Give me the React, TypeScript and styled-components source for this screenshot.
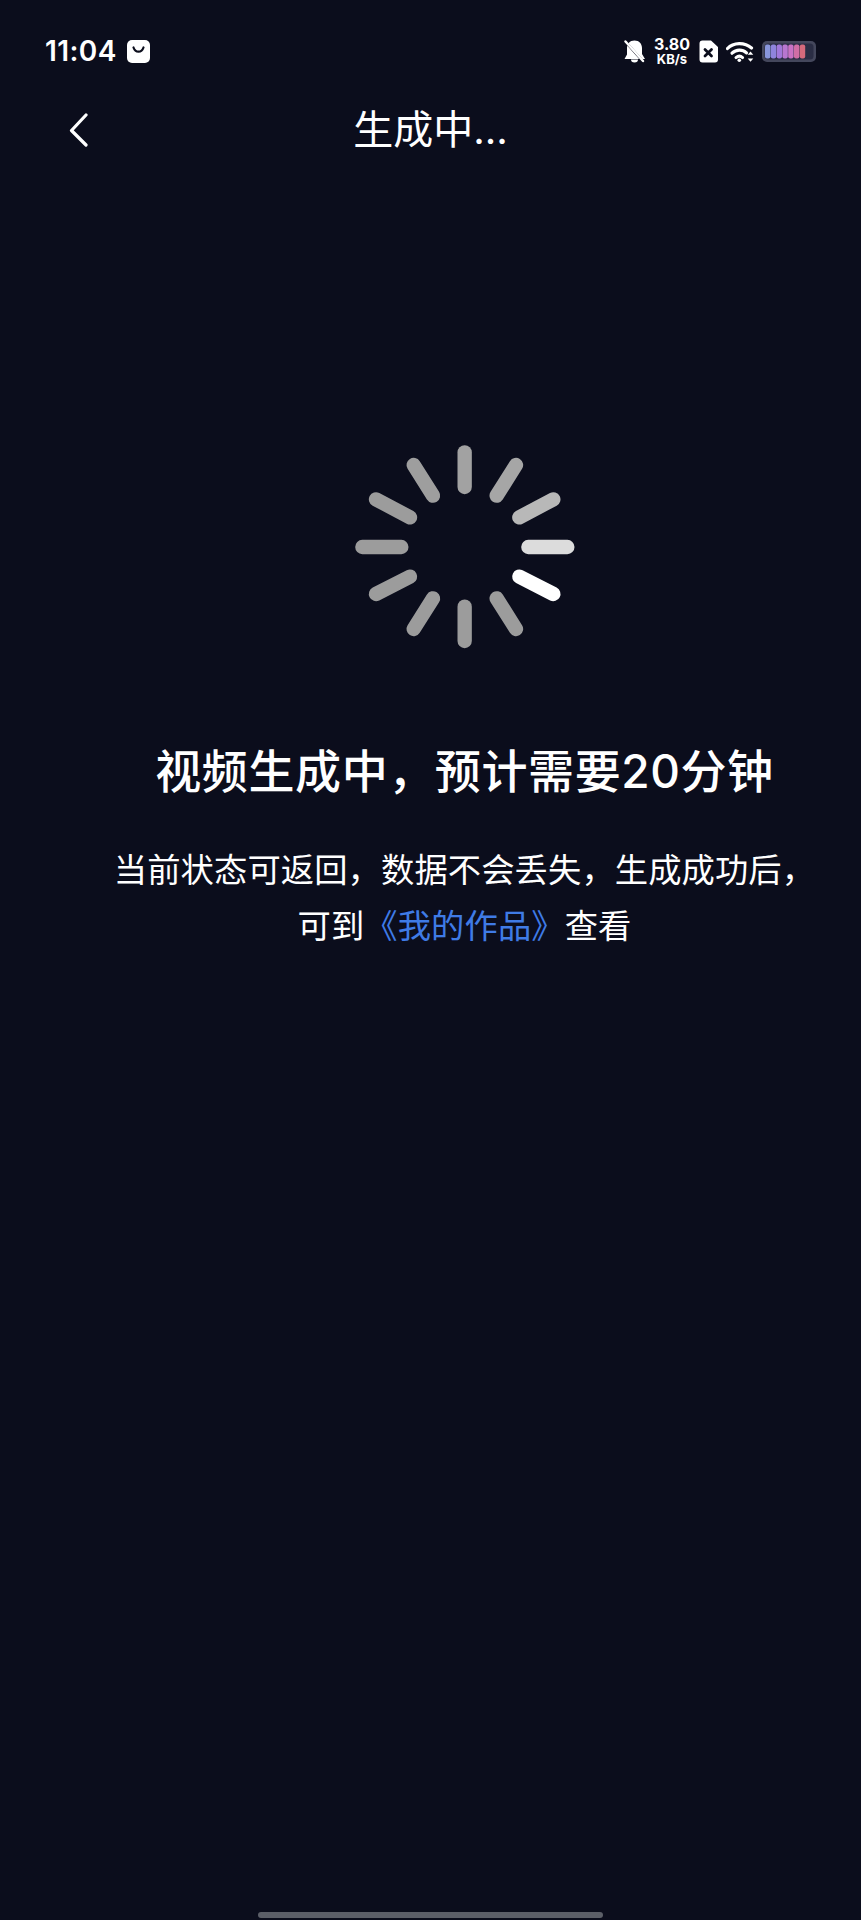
import React from "react";
import styled, { createGlobalStyle } from "styled-components";

const GlobalStyle = createGlobalStyle`
  html, body {
    margin: 0;
    padding: 0;
    background: #0b0d1c;
  }
  body {
    font-family: Inter, "Noto Sans CJK SC", sans-serif;
    color: #fff;
  }
`;

const Page = styled.div`
  display: flex;
  flex-direction: column;
  height: 1920px;
  overflow: hidden;
  background: #0b0d1c;
`;

// Status bar
const StatusBar = styled.div`
  display: flex;
  align-items: center;
  justify-content: space-between;
  box-sizing: border-box;
  height: 100px;
  padding: 20px 45px 18px 45px;
`;

const StatusLeft = styled.div`
  display: flex;
  align-items: center;
  gap: 10px;
`;

const Time = styled.span`
  font-size: 28px;
  font-weight: 600;
  line-height: 28px;
  letter-spacing: 0.4px;
`;

const StatusRight = styled.div`
  display: flex;
  align-items: center;
  gap: 8px;
`;

const Speed = styled.div`
  display: flex;
  flex-direction: column;
  align-items: center;
  font-weight: 700;
  width: 38px;
`;

const SpeedValue = styled.span`
  font-size: 16px;
  line-height: 16px;
`;

const SpeedUnit = styled.span`
  font-size: 13px;
  line-height: 14px;
`;

// Nav bar
const NavBar = styled.div`
  display: grid;
  grid-template-columns: 1fr auto 1fr;
  align-items: center;
  height: 60px;
`;

const BackButton = styled.button`
  justify-self: start;
  display: flex;
  margin-left: 68px;
  padding: 0;
  border: 0;
  background: none;
`;

const Title = styled.h1`
  margin: 0;
  font-size: 40px;
  font-weight: 400;
  line-height: 60px;
`;

// Main content
const Main = styled.main`
  display: flex;
  flex-direction: column;
  align-items: center;
  padding: 270px 0 0 68px;
`;

const Spinner = styled.svg`
  display: block;
  margin-right: 9px;
`;

const Heading = styled.h2`
  margin: 81px 0 0;
  font-size: 46px;
  font-weight: 500;
  line-height: 60px;
  letter-spacing: 0.6px;
  white-space: nowrap;
`;

const Description = styled.p`
  margin: 41px 0 0;
  font-size: 33.3px;
  line-height: 56px;
  letter-spacing: 0.1px;
  text-align: center;
  white-space: nowrap;
`;

const WorksLink = styled.span`
  color: #3f7be6;
`;

const HomeIndicator = styled.div`
  align-self: center;
  width: 345px;
  height: 6px;
  margin: auto 0 2px;
  border-radius: 3px;
  background: #5c5f68;
`;

// endpoints of each spinner bar, clockwise from 12 o'clock
const bars: { x1: number; y1: number; x2: number; y2: number; color: string }[] = [
  { x1: 374, y1: 67, x2: 374, y2: 171, color: "#a2a2a2" },
  { x1: 528, y1: 105, x2: 470, y2: 197, color: "#a6a6a6" },
  { x1: 640, y1: 208, x2: 538, y2: 262, color: "#b8b8b8" },
  { x1: 682, y1: 351, x2: 565, y2: 351, color: "#dcdcdc" },
  { x1: 640, y1: 492, x2: 538, y2: 440, color: "#ffffff" },
  { x1: 528, y1: 597, x2: 470, y2: 505, color: "#9c9c9c" },
  { x1: 374, y1: 633, x2: 374, y2: 530, color: "#9c9c9c" },
  { x1: 221, y1: 597, x2: 279, y2: 505, color: "#9c9c9c" },
  { x1: 108, y1: 492, x2: 210, y2: 440, color: "#9c9c9c" },
  { x1: 67, y1: 351, x2: 184, y2: 351, color: "#9c9c9c" },
  { x1: 108, y1: 208, x2: 210, y2: 262, color: "#9c9c9c" },
  { x1: 221, y1: 105, x2: 279, y2: 197, color: "#9e9e9e" },
];

const batteryColors = ["#8896dc", "#8f84dc", "#a178da", "#b876d0", "#c872c4", "#d06ea6", "#d66a7c"];

const BagIcon = () => (
  <svg width="23" height="23" viewBox="0 0 23 23">
    <path d="M5 0h13a5 5 0 0 1 5 5v13a5 5 0 0 1-5 5H5a5 5 0 0 1-5-5V5a5 5 0 0 1 5-5z" fill="#fff" />
    <path d="M6.500 7.500c1 3 3 4.200 5 4.200s4-1.200 5-4.200" fill="none" stroke="#0b0d1c" strokeWidth="2.200" strokeLinecap="round" />
  </svg>
);

const BellOffIcon = () => (
  <svg width="21" height="23" viewBox="0 0 21 23">
    <path d="M10.500 0.500c4.800 0 7.500 3.500 7.500 7.500v6l3 5H0.500L3 14.500V8c0-4 2.700-7.500 7.500-7.500z" fill="#fff" />
    <path d="M7 19.500h7a3.500 3 0 0 1-7 0z" fill="#fff" />
    <path d="M3 3.500l17 19" stroke="#0b0d1c" strokeWidth="2.600" />
    <path d="M1.500 1.500l17.500 19.500" stroke="#fff" strokeWidth="2.400" strokeLinecap="round" />
  </svg>
);

const SimIcon = () => (
  <svg width="19" height="23" viewBox="0 0 19 23">
    <path d="M3.500 0.500h8.500l7 6.500v12.500a3 3 0 0 1-3 3H3.500a3 3 0 0 1-3-3V3.500a3 3 0 0 1 3-3z" fill="#fff" />
    <path d="M6 9.500l6.500 6.500M12.500 9.500L6 16" stroke="#0b0d1c" strokeWidth="2.800" strokeLinecap="round" />
  </svg>
);

const WifiIcon = () => (
  <svg width="28" height="21" viewBox="0 0 28 21" fill="none">
    <path d="M1.500 7.500C7.500 1.200 18.500 1 25.500 7" stroke="#fff" strokeWidth="3.200" strokeLinecap="round" />
    <path d="M6 12.200c4.200-4 10.500-4 14.500-.3" stroke="#fff" strokeWidth="3.200" strokeLinecap="round" />
    <path d="M10 16.600c2-1.700 4.700-1.700 6.600 0" stroke="#fff" strokeWidth="3" strokeLinecap="round" />
    <circle cx="13.300" cy="19.200" r="1.800" fill="#fff" />
    <path d="M24.500 10.500l2.800 3.300h-5.600zM24.500 20.800l2.800-3.300h-5.600z" fill="#fff" />
  </svg>
);

const BatteryIcon = () => (
  <svg width="54" height="21" viewBox="0 0 54 21">
    <rect x="0" y="0" width="54" height="21" rx="5" fill="#44475c" />
    <rect x="2.500" y="2.500" width="49" height="16" rx="3.500" fill="#2a2d44" />
    {batteryColors.map((color, i) => (
      <rect key={color} x={3 + i * 5.800} y="3.500" width="5.400" height="14" rx="2" fill={color} />
    ))}
  </svg>
);

const BackIcon = () => (
  <svg width="20" height="34" viewBox="0 0 20 34" fill="none">
    <path d="M18 2L3.500 17.500 18 32" stroke="#fff" strokeWidth="3.200" strokeLinecap="round" strokeLinejoin="round" />
  </svg>
);

const App: React.FC = () => {
  return (
    <Page>
      <GlobalStyle />
      <StatusBar>
        <StatusLeft>
          <Time>11:04</Time>
          <BagIcon />
        </StatusLeft>
        <StatusRight>
          <BellOffIcon />
          <Speed>
            <SpeedValue>3.80</SpeedValue>
            <SpeedUnit>KB/s</SpeedUnit>
          </Speed>
          <SimIcon />
          <WifiIcon />
          <BatteryIcon />
        </StatusRight>
      </StatusBar>
      <NavBar>
        <BackButton>
          <BackIcon />
        </BackButton>
        <Title>生成中...</Title>
      </NavBar>
      <Main>
        <Spinner width="240" height="230" viewBox="0 0 720 690">
          {bars.map((bar) => (
            <line
              key={`${bar.x1}-${bar.y1}`}
              x1={bar.x1}
              y1={bar.y1}
              x2={bar.x2}
              y2={bar.y2}
              stroke={bar.color}
              strokeWidth="43"
              strokeLinecap="round"
            />
          ))}
        </Spinner>
        <Heading>视频生成中，预计需要20分钟</Heading>
        <Description>
          当前状态可返回，数据不会丢失，生成成功后，
          <br />
          可到<WorksLink>《我的作品》</WorksLink>查看
        </Description>
      </Main>
      <HomeIndicator />
    </Page>
  );
};

export default App;
